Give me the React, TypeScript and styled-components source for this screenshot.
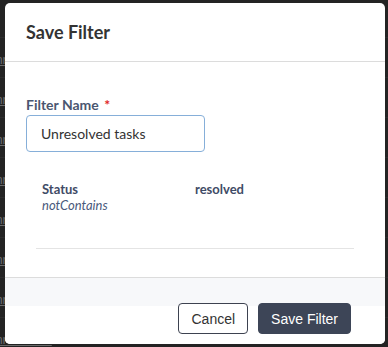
import React from "react";
import styled, { createGlobalStyle } from "styled-components";

const Global = createGlobalStyle`
  html, body { margin: 0; padding: 0; }
  body {
    background: #232323;
    font-family: Lato, "Noto Sans", sans-serif;
    width: 388px;
    height: 347px;
    overflow: hidden;
  }
  * { box-sizing: border-box; }
`;

const Page = styled.div`
  position: relative;
  width: 388px;
  height: 347px;
  overflow: hidden;
  background: #232323;
`;

const Backdrop = styled.div`
  display: flex;
  flex-direction: column;
  padding-top: 37px;
`;

const BackRow = styled.div`
  height: 40px;
  border-top: 1px solid #2c2c2c;
  display: flex;
  align-items: flex-end;
  padding-bottom: 10px;
  overflow: hidden;
`;

const BackLink = styled.span`
  margin-left: -14px;
  font-family: "Liberation Sans", Arial, sans-serif;
  font-size: 13px;
  color: #6a6a6a;
  text-decoration: underline;
  white-space: nowrap;
`;

const Modal = styled.div`
  position: absolute;
  left: 5px;
  top: 3px;
  width: 380px;
  height: 341px;
  background: #fff;
  border-radius: 5px;
  display: flex;
  flex-direction: column;
  overflow: hidden;
`;

const Header = styled.div`
  height: 59px;
  padding: 18px 21px 0;
  border-bottom: 1px solid #dcdcdc;
`;

const Title = styled.h2`
  margin: 0;
  font-size: 18px;
  font-weight: 700;
  color: #333;
  line-height: 22px;
`;

const Body = styled.div`
  flex: 1;
  padding: 34px 21px 0;
  display: flex;
  flex-direction: column;
`;

const Label = styled.label`
  display: block;
  font-size: 14px;
  line-height: 17px;
  font-weight: 700;
  color: #4a5670;
`;

const Required = styled.span`
  color: #e02424;
  margin-left: 2px;
`;

const Input = styled.input`
  margin-top: 2px;
  width: 179px;
  height: 37px;
  border: 1px solid #86afd9;
  border-radius: 4px;
  padding: 0 14px;
  font-family: Lato, "Noto Sans", sans-serif;
  font-size: 14px;
  color: #333;
  outline: none;
`;

const FilterList = styled.div`
  margin: 29px 10px 0;
  border-bottom: 1px solid #e4e4e4;
  padding-bottom: 34px;
`;

const FilterItem = styled.div`
  display: grid;
  grid-template-columns: 153px 1fr;
  padding-left: 6px;
`;

const FieldName = styled.div`
  font-size: 13px;
  line-height: 16px;
  font-weight: 700;
  color: #3f4b66;
`;

const Operator = styled.div`
  font-size: 13px;
  line-height: 17px;
  font-style: italic;
  color: #4a5a7c;
`;

const Value = styled.div`
  font-size: 13px;
  line-height: 16px;
  font-weight: 700;
  color: #3f4b66;
`;

const Footer = styled.div`
  border-top: 1px solid #dcdcdc;
  height: 67px;
  background: linear-gradient(#f7f8fa 0 28px, #fff 28px);
  display: flex;
  justify-content: flex-end;
  align-items: flex-start;
  gap: 10px;
  padding: 25px 34px 0 0;
`;

const Button = styled.button<{ $primary?: boolean }>`
  height: 31px;
  padding: 0 12px;
  border-radius: 4px;
  font-family: "Liberation Sans", Arial, sans-serif;
  font-size: 14px;
  cursor: pointer;
  border: 1px solid ${(p) => (p.$primary ? "#3d4557" : "#3d4250")};
  background: ${(p) => (p.$primary ? "#3d4557" : "#fff")};
  color: ${(p) => (p.$primary ? "#fff" : "#333")};
`;

export default function App() {
  const rows = [0, 1, 2, 3, 4, 5, 6, 7];
  return (
    <Page>
      <Global />
      <Backdrop>
        {rows.map((r) => (
          <BackRow key={r}>
            <BackLink>Unresolved</BackLink>
          </BackRow>
        ))}
      </Backdrop>
      <Modal>
        <Header>
          <Title>Save Filter</Title>
        </Header>
        <Body>
          <Label>
            Filter Name <Required>*</Required>
          </Label>
          <Input defaultValue="Unresolved tasks" />
          <FilterList>
            <FilterItem>
              <div>
                <FieldName>Status</FieldName>
                <Operator>notContains</Operator>
              </div>
              <Value>resolved</Value>
            </FilterItem>
          </FilterList>
        </Body>
        <Footer>
          <Button>Cancel</Button>
          <Button $primary>Save Filter</Button>
        </Footer>
      </Modal>
    </Page>
  );
}
